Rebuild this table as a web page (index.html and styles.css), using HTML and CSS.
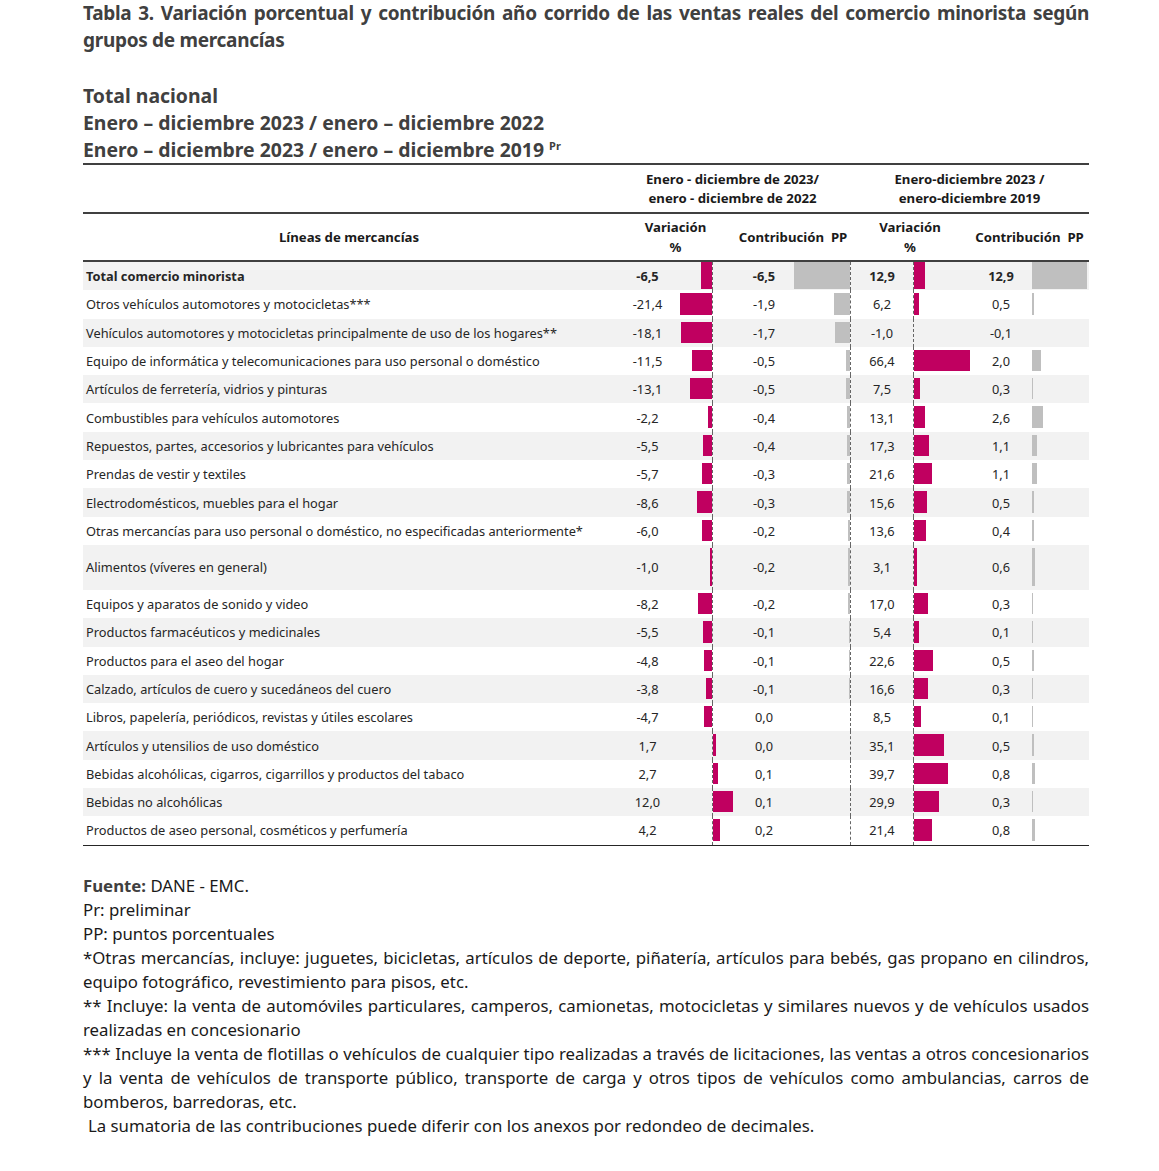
FILE: index.html
```html
<!DOCTYPE html>
<html>
    <head>
        <title>Tabla 3 - Comercio minorista</title>
        <link rel="stylesheet" href="styles.css">
    </head>
    <body>
        <div class="page">
            <p class="title">Tabla 3. Variación porcentual y contribución año corrido de las ventas reales del comercio minorista según grupos de mercancías</p>

            <p class="subtitle">
                Total nacional<br>
                Enero – diciembre 2023 / enero – diciembre 2022<br>
                Enero – diciembre 2023 / enero – diciembre 2019 <sup>Pr</sup>
            </p>

            <div class="table">
                <div class="head-row group-head">
                    <div></div>
                    <div class="group">Enero - diciembre de 2023/<br>enero - diciembre de 2022</div>
                    <div class="group">Enero-diciembre 2023 /<br>enero-diciembre 2019</div>
                </div>
                <div class="head-row col-head">
                    <div>Líneas de mercancías</div>
                    <div>Variación<br>%</div>
                    <div>Contribución&nbsp; PP</div>
                    <div>Variación<br>%</div>
                    <div>Contribución&nbsp; PP</div>
                </div>
                <div class="rows"></div>
            </div>

            <div class="notes">
                <p><b>Fuente:</b> DANE - EMC.</p>
                <p>Pr: preliminar</p>
                <p>PP: puntos porcentuales</p>
                <p>*Otras mercancías, incluye: juguetes, bicicletas, artículos de deporte, piñatería, artículos para bebés, gas propano en cilindros, equipo fotográfico, revestimiento para pisos, etc.</p>
                <p>** Incluye: la venta de automóviles particulares, camperos, camionetas, motocicletas y similares nuevos y de vehículos usados realizadas en concesionario</p>
                <p>*** Incluye la venta de flotillas o vehículos de cualquier tipo realizadas a través de licitaciones, las ventas a otros concesionarios y la venta de vehículos de transporte público, transporte de carga y otros tipos de vehículos como ambulancias, carros de bomberos, barredoras, etc.</p>
                <p class="indent">La sumatoria de las contribuciones puede diferir con los anexos por redondeo de decimales.</p>
            </div>
        </div>

        <script>
            // nombre, variación 2022, contribución 2022, variación 2019, contribución 2019
            const data = [
                ['Total comercio minorista', -6.5, -6.5, 12.9, 12.9, 'total'],
                ['Otros vehículos automotores y motocicletas***', -21.4, -1.9, 6.2, 0.5],
                ['Vehículos automotores y motocicletas principalmente de uso de los hogares**', -18.1, -1.7, -1.0, -0.1],
                ['Equipo de informática y telecomunicaciones para uso personal o doméstico', -11.5, -0.5, 66.4, 2.0],
                ['Artículos de ferretería, vidrios y pinturas', -13.1, -0.5, 7.5, 0.3],
                ['Combustibles para vehículos automotores', -2.2, -0.4, 13.1, 2.6],
                ['Repuestos, partes, accesorios y lubricantes para vehículos', -5.5, -0.4, 17.3, 1.1],
                ['Prendas de vestir y textiles', -5.7, -0.3, 21.6, 1.1],
                ['Electrodomésticos, muebles para el hogar', -8.6, -0.3, 15.6, 0.5],
                ['Otras mercancías para uso personal o doméstico, no especificadas anteriormente*', -6.0, -0.2, 13.6, 0.4],
                ['Alimentos (víveres en general)', -1.0, -0.2, 3.1, 0.6, 'tall'],
                ['Equipos y aparatos de sonido y video', -8.2, -0.2, 17.0, 0.3],
                ['Productos farmacéuticos y medicinales', -5.5, -0.1, 5.4, 0.1],
                ['Productos para el aseo del hogar', -4.8, -0.1, 22.6, 0.5],
                ['Calzado, artículos de cuero y sucedáneos del cuero', -3.8, -0.1, 16.6, 0.3],
                ['Libros, papelería, periódicos, revistas y útiles escolares', -4.7, 0.0, 8.5, 0.1],
                ['Artículos y utensilios de uso doméstico', 1.7, 0.0, 35.1, 0.5],
                ['Bebidas alcohólicas, cigarros, cigarrillos y productos del tabaco', 2.7, 0.1, 39.7, 0.8],
                ['Bebidas no alcohólicas', 12.0, 0.1, 29.9, 0.3],
                ['Productos de aseo personal, cosméticos y perfumería', 4.2, 0.2, 21.4, 0.8]
            ];

            function fmt(n){
                return n.toFixed(1).replace('.', ',');
            }

            function bar(value, scale, kind){
                const w = Math.abs(value) * scale;
                return `<span class="bar ${kind}" style="width:${w.toFixed(1)}px"></span>`;
            }

            let html = '';
            data.forEach(function(r, i){
                const cls = ['row'];
                if(i % 2 === 0) cls.push('shaded');
                if(r[5]) cls.push(r[5]);

                html += `<div class="${cls.join(' ')}">
                    <div class="label">${r[0]}</div>
                    <div class="num">${fmt(r[1])}</div>
                    <div class="axis-cell">
                        <div class="neg">${r[1] < 0 ? bar(r[1], 1.7, 'pink') : ''}</div>
                        <div class="pos">${r[1] > 0 ? bar(r[1], 1.7, 'pink') : ''}</div>
                    </div>
                    <div class="num">${fmt(r[2])}</div>
                    <div class="neg right-cell">${r[2] < 0 ? bar(r[2], 8.6, 'grey') : ''}</div>
                    <div class="num split">${fmt(r[3])}</div>
                    <div class="pos">${r[3] > 0 ? bar(r[3], 0.845, 'pink') : ''}</div>
                    <div class="num">${fmt(r[4])}</div>
                    <div class="pos plain">${r[4] > 0 ? bar(r[4], 4.25, 'grey') : ''}</div>
                </div>`;
            });
            document.querySelector('.rows').innerHTML = html;
        </script>
    </body>
</html>
```

FILE: styles.css
```css
body{
    margin: 0;
    background-color: white;
    color: #262626;
    font-family: "Noto Sans", "Open Sans", sans-serif;
}

p{
    margin: 0;
}

.page{
    width: 1006px;
    margin-left: 83px;
}

.title{
    font-size: 19px;
    font-weight: bold;
    line-height: 27px;
    letter-spacing: -0.3px;
    color: #404040;
    text-align: justify;
    margin-bottom: 28px;
}

.subtitle{
    font-size: 19.4px;
    font-weight: bold;
    line-height: 27px;
    color: #404040;
}

.subtitle sup{
    font-size: 11px;
    vertical-align: 7px;
    line-height: 0;
}

.table{
    border-top: 2px solid #404040;
    border-bottom: 1px solid #262626;
    font-size: 12.8px;
}

.head-row,
.row{
    display: grid;
    grid-template-columns: 532px 65px 56px 56px 58px 63px 57px 62px 57px;
}

.head-row{
    font-size: 13.2px;
    font-weight: bold;
    text-align: center;
    align-items: center;
    border-bottom: 2px solid #404040;
    color: #1a1a1a;
}

.group-head{
    height: 47px;
    line-height: 19px;
}

.group-head .group{
    grid-column: span 4;
}

.col-head{
    height: 46px;
    line-height: 20px;
}

.col-head div:nth-child(n+2){
    grid-column: span 2;
}

.row{
    height: 28.3px;
    align-items: stretch;
}

.row.tall{
    height: 45px;
}

.row.shaded{
    background-color: #f2f2f2;
}

.row.total{
    font-weight: bold;
}

.label{
    padding-left: 3px;
    display: flex;
    align-items: center;
    white-space: nowrap;
}

.num{
    display: flex;
    align-items: center;
    justify-content: center;
}

.split{
    border-left: 1px dashed #666;
}

.axis-cell{
    display: grid;
    grid-template-columns: 32px 1fr;
}

.neg,
.pos{
    display: flex;
    padding: 3px 0 4px;
}

.neg{
    justify-content: flex-end;
}

.pos{
    justify-content: flex-start;
    border-left: 1px dashed #666;
}

.pos.plain{
    border-left: none;
}

.bar{
    display: block;
    height: 100%;
}

.total .neg,
.total .pos{
    padding: 0 0 1px;
}

.bar.pink{
    background-color: #c00060;
}

.bar.grey{
    background-color: #bfbfbf;
}

.notes{
    margin-top: 28px;
    font-size: 16.8px;
    line-height: 24px;
    color: #1a1a1a;
    text-align: justify;
}

.notes b{
    color: #404040;
}

.notes .indent{
    padding-left: 5px;
}
```
